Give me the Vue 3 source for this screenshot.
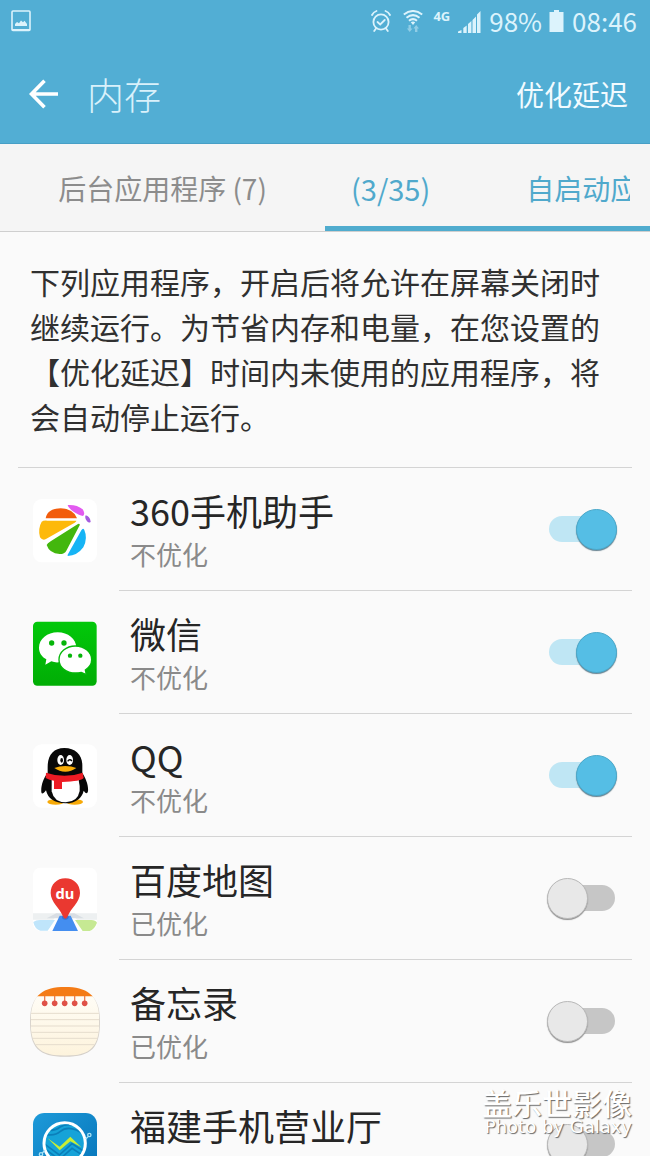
<script setup>
import { reactive } from 'vue'

const apps = reactive([
  { id: 'assistant', name: '360手机助手', running: true },
  { id: 'wechat', name: '微信', running: true },
  { id: 'qq', name: 'QQ', running: true },
  { id: 'map', name: '百度地图', running: false },
  { id: 'memo', name: '备忘录', running: false },
  { id: 'mobile', name: '福建手机营业厅', running: false }
])
</script>

<template>
  <div class="screen">
    <header class="top">
      <div class="status">
        <svg class="shot" width="20" height="22" viewBox="0 0 20 22" aria-hidden="true">
          <rect x="1" y="1" width="18" height="19.5" rx="1" fill="none" stroke="currentColor" stroke-width="1.6" />
          <path d="M1 19h18v2H1z" fill="currentColor" />
          <path d="M4 16v-2l2-2 2 1.200 2-2.700 2 1.700 1.500-1.500 2.500 3.300v2z" fill="currentColor" />
        </svg>
        <svg class="alarm" width="20" height="22" viewBox="0 0 20 22" fill="none" stroke="currentColor" stroke-width="1.8" stroke-linecap="round" aria-hidden="true">
          <circle cx="10" cy="12" r="7.600" />
          <path d="M1 5Q2.500 2 5.500 1M14.500 1Q17.500 2 19 5M5 18.500l-1.800 2.500M15 18.500l1.800 2.500M6.500 12l2.700 2.500 4.500-4.500" />
        </svg>
        <svg class="wifi" width="20" height="22" viewBox="0 0 20 22" aria-hidden="true">
          <g fill="none" stroke="currentColor" stroke-width="2">
            <path d="M0.800 4.500Q10-2.500 19.200 4.500" />
            <path d="M3.500 7.800Q10 2.500 16.500 7.800" />
            <path d="M6 10.800Q10 7.400 14 10.800" />
          </g>
          <path d="M7.800 12.300Q10 10.800 12.200 12.300L10 15z" fill="currentColor" />
          <path d="M5.500 15h2.400v3.500h1.600L6.700 22l-2.800-3.500h1.600zM12 22h2.400v-3.500H16L13.200 15l-2.800 3.500H12z" fill="currentColor" opacity=".45" />
        </svg>
        <span class="network">4G</span>
        <svg class="signal" width="23" height="23" viewBox="0 0 23 23" fill="currentColor" aria-hidden="true">
          <path d="M0 23v-1.500L3.500 20v3zM5.300 23v-5l3.400-2.400V23zM10 23v-9l3.400-3V23zM14.500 23V10L18 6.500V23zM19 23V4.500L22.500 1v22z" />
        </svg>
        <span class="level">98%</span>
        <svg class="battery" width="15" height="22" viewBox="0 0 15 22" fill="currentColor" aria-hidden="true">
          <path d="M5 0h5v2h4.500v20H.5V2H5z" />
        </svg>
        <time class="clock">08:46</time>
      </div>
      <div class="bar">
        <button class="back" type="button" aria-label="返回">
          <svg width="30" height="30" viewBox="0 0 30 30" fill="none" stroke="currentColor" stroke-width="3.600" aria-hidden="true">
            <path d="M29 15H3M15.500 1.800L2.500 15l13 13.200" />
          </svg>
        </button>
        <h1>内存</h1>
        <button class="delay" type="button">优化延迟</button>
      </div>
    </header>

    <nav class="tabs">
      <button class="tab" type="button">后台应用程序 (7)</button>
      <button class="tab active" type="button">
        <span class="ticker"><span class="count">(3/35)</span><span>自启动应用程序</span></span>
      </button>
    </nav>

    <main class="content">
      <p class="intro">下列应用程序，开启后将允许在屏幕关闭时继续运行。为节省内存和电量，在您设置的【优化延迟】时间内未使用的应用程序，将会自动停止运行。</p>

      <ul class="apps">
        <li v-for="app in apps" :key="app.id" class="app">
          <svg v-if="app.id === 'assistant'" class="icon" viewBox="30 27 210 210" aria-hidden="true">
            <rect x="39" y="39" width="192" height="190" rx="26" fill="#fff" />
            <path d="M77 97Q82 68 122 67Q160 68 171 97Z" fill="#f25c0c" />
            <path d="M65 107Q70 103 82 104L169 104Q170 106 164 110L78 159Q68 165 60 154Q53 128 65 107Z" fill="#fdb90b" />
            <path d="M80 177Q82 172 92 166L174 114Q181 112 179 118L139 194Q134 204 119 204Q88 202 80 177Z" fill="#43b70d" />
            <path d="M143 206L184 133Q189 124 193 132Q204 157 190 184Q172 209 143 210Z" fill="#16b4f5" />
            <path d="M143 57Q170 55 188 70Q197 83 189 90Q178 89 162 78Q144 65 143 57Z" fill="#e25af0" />
            <path d="M197 88Q209 90 212 107Q208 113 201 106Q193 95 197 88Z" fill="#a45bdf" />
          </svg>

          <svg v-else-if="app.id === 'wechat'" class="icon" viewBox="30 27 210 210" aria-hidden="true">
            <defs>
              <linearGradient id="wechat-bg" x1="0" y1="0" x2="0" y2="1">
                <stop offset="0" stop-color="#02c80a" /><stop offset="1" stop-color="#01ad05" />
              </linearGradient>
            </defs>
            <rect x="39" y="38" width="191" height="192" rx="13" fill="url(#wechat-bg)" />
            <path d="M113 70C82 70 57 90 57 116C57 131 65 143 79 151L76 167L94 157Q104 161 116 160C146 158 169 141 169 116C169 90 144 70 113 70Z" fill="#fff" />
            <path d="M166 111C138 111 117 130 117 152C117 175 139 192 166 192Q176 192 184 190L199 197L196 183C208 175 215 165 215 152C215 130 194 111 166 111Z" fill="#fff" stroke="#05b70a" stroke-width="4" />
            <g fill="#05b509">
              <circle cx="95" cy="102" r="8" /><circle cx="132" cy="102" r="8" />
              <circle cx="150" cy="140" r="6.500" /><circle cx="181" cy="140" r="6.500" />
            </g>
          </svg>

          <svg v-else-if="app.id === 'qq'" class="icon" viewBox="30 30 210 210" aria-hidden="true">
            <rect x="39" y="40" width="192" height="190" rx="26" fill="#fff" />
            <ellipse cx="107" cy="213" rx="25" ry="8" fill="#f7aa08" />
            <ellipse cx="164" cy="213" rx="25" ry="8" fill="#f7aa08" />
            <path d="M133 51C99 51 83 75 83 107V125C70 142 62 165 64 184Q66 194 78 178C83 202 104 217 136 217C168 217 186 201 191 179Q201 193 204 181C206 163 197 141 187 126V103C187 72 167 51 133 51Z" fill="#080808" />
            <path d="M95 147H176Q180 164 179 180Q173 213 137 214Q102 214 95 181Z" fill="#fff" />
            <path d="M78 125Q134 144 188 125L191 141Q184 151 126 153V174H102V149Q88 148 77 141Z" fill="#ed1b24" />
            <ellipse cx="122" cy="87" rx="10" ry="15" fill="#fff" /><ellipse cx="149" cy="87" rx="10" ry="15" fill="#fff" />
            <ellipse cx="125" cy="88" rx="4" ry="7" fill="#080808" />
            <path d="M143 91Q149 82 156 90" fill="none" stroke="#080808" stroke-width="4" />
            <path d="M103 111Q118 105 136 105Q155 105 169 111Q154 122 136 122Q118 122 103 111Z" fill="#f8ad09" />
          </svg>

          <svg v-else-if="app.id === 'map'" class="icon" viewBox="30 27 210 210" aria-hidden="true">
            <rect x="39" y="38" width="192" height="190" rx="22" fill="#fff" />
            <path d="M39 175H115L100 194H39ZM156 175H231V194H171Z" fill="#edf0f1" />
            <path d="M80 190L109 175H163L192 190Z" fill="#d9dee4" />
            <path d="M40 201Q49 194 63 195H105L83 227H61Q44 222 40 201Z" fill="#bfe5fb" />
            <path d="M165 195H211Q226 194 231 203Q223 224 209 228H188Z" fill="#c6e993" />
            <path d="M119 182H152L174 228H97Z" fill="#448ef0" />
            <ellipse cx="136" cy="187" rx="10" ry="7" fill="#315fc0" opacity=".6" />
            <path d="M136 70C110 70 92 89 92 114C92 142 119 158 130 186Q136 196 142 186C153 158 180 142 180 114C180 89 162 70 136 70Z" fill="#ea3830" />
            <text class="du" x="135" y="132" text-anchor="middle" fill="#fff">du</text>
          </svg>

          <svg v-else-if="app.id === 'memo'" class="icon" viewBox="30 33 210 210" aria-hidden="true">
            <defs>
              <clipPath id="memo-shape">
                <path d="M135 33C202 33 238 57 238 135C238 211 214 239 135 239C56 239 32 211 32 135C32 57 68 33 135 33Z" />
              </clipPath>
              <linearGradient id="memo-paper" x1="0" y1="0" x2="0" y2="1">
                <stop offset="0" stop-color="#fffefa" /><stop offset="1" stop-color="#fdf3dc" />
              </linearGradient>
            </defs>
            <path d="M135 35C203 35 240 58 240 137C240 214 215 242 135 242C55 242 30 214 30 137C30 58 67 35 135 35Z" fill="#d5d0c9" />
            <g clip-path="url(#memo-shape)">
              <path d="M30 30h210v212H30z" fill="url(#memo-paper)" />
              <path d="M30 30h210v31H30z" fill="#f47b16" />
              <path d="M30 112h210M30 131h210M30 150h210M30 169h210M30 187h210M30 206h210" stroke="#e5dccd" stroke-width="3" />
              <path d="M74 60v20M104 60v20M134 60v20M164 60v20M194 60v20" stroke="#ee8050" stroke-width="4" />
              <g fill="#df5147">
                <circle cx="74" cy="82" r="8.500" /><circle cx="104" cy="82" r="8.500" /><circle cx="134" cy="82" r="8.500" />
                <circle cx="164" cy="82" r="8.500" /><circle cx="194" cy="82" r="8.500" />
              </g>
            </g>
          </svg>

          <svg v-else class="icon" viewBox="30 39 210 210" aria-hidden="true">
            <defs>
              <linearGradient id="mobile-bg" x1="0" y1="0" x2="1" y2="1">
                <stop offset="0" stop-color="#1d9ad9" /><stop offset="1" stop-color="#0573b8" />
              </linearGradient>
              <clipPath id="mobile-disc"><circle cx="134" cy="139" r="57" /></clipPath>
            </defs>
            <rect x="39" y="48" width="192" height="192" rx="34" fill="url(#mobile-bg)" />
            <circle cx="134" cy="139" r="62" fill="#16a3d8" stroke="#fff" stroke-width="9" />
            <g clip-path="url(#mobile-disc)" fill="none" stroke="#0b7fba" stroke-width="5">
              <path d="M75 112Q105 118 120 104Q150 80 196 116M75 100Q105 103 120 90Q150 72 196 100M75 142L118 174L156 140L196 166M75 156L118 188L156 154L196 180" />
            </g>
            <path d="M83 124L119 149L151 119L184 151L151 133L119 160Z" fill="#c9ee35" />
            <g fill="none" stroke="#a9e3f5" stroke-width="4">
              <circle cx="208" cy="114" r="5" /><path d="M197 126l7-7" />
              <circle cx="63" cy="172" r="5" /><path d="M67 168l8-8" />
            </g>
          </svg>

          <div class="body">
            <label class="label" :for="'switch-' + app.id">
              <span class="name">{{ app.name }}</span>
              <span class="state">{{ app.running ? '不优化' : '已优化' }}</span>
            </label>
            <input :id="'switch-' + app.id" v-model="app.running" class="switch" type="checkbox" role="switch" />
          </div>
        </li>
      </ul>
    </main>

    <div class="watermark">
      <span class="mark-cn">盖乐世影像</span>
      <span class="mark-en">Photo by Galaxy</span>
    </div>
  </div>
</template>

<style>
body {
  margin: 0;
}
</style>

<style scoped>
.screen {
  position: relative;
  display: flex;
  flex-direction: column;
  height: 100vh;
  overflow: hidden;
  background: #fafafa;
  color: #262626;
  font-family: "Noto Sans CJK SC", "Noto Sans", sans-serif;
}

button {
  margin: 0;
  padding: 0;
  border: 0;
  background: none;
  color: inherit;
  font: inherit;
  cursor: pointer;
}

svg {
  display: block;
  flex: none;
}

.top {
  flex: none;
  background: #52aed4;
  border-bottom: 1px solid #479fc6;
}

.status {
  display: flex;
  align-items: center;
  padding: 0 13px 2px 11px;
  color: #dcf3fc;
  font-size: 26px;
  line-height: 42px;
}

.shot {
  margin-right: auto;
}

.wifi {
  margin-left: 12px;
}

.network {
  margin: 0 8px 0 10px;
  font: bold 13px/16px "Noto Sans", sans-serif;
  align-self: flex-start;
  padding-top: 8px;
}

.level {
  margin: 0 7px 0 8px;
}

.clock {
  margin-left: 8px;
}

.bar {
  display: flex;
  align-items: center;
  height: 99px;
  padding: 0 22px 0 29px;
  color: #fff;
}

h1 {
  flex: 1;
  margin: 0 0 0 28px;
  color: #d9f1fb;
  font-size: 37px;
  font-weight: 300;
  line-height: 54px;
}

.delay {
  color: #f2fbff;
  font-size: 28px;
  line-height: 40px;
}

.tabs {
  display: grid;
  flex: none;
  grid-template-columns: 1fr 1fr;
  height: 87px;
  background: #f5f5f5;
  border-bottom: 1px solid #cfcfcf;
}

.tab {
  min-width: 0;
  box-sizing: border-box;
  padding-top: 6px;
  border-bottom: 5px solid transparent;
  color: #8c8c8c;
  font-size: 28px;
  line-height: 40px;
}

.active {
  padding: 6px 20px 0 26px;
  border-bottom-color: #50acce;
  color: #50a9cc;
}

.ticker {
  display: flex;
  gap: 96px;
  overflow: hidden;
  white-space: nowrap;
}

.count {
  font-size: 29px;
}

.content {
  flex: 1;
  min-height: 0;
  overflow-y: auto;
  scrollbar-width: none;
}

.intro {
  margin: 0 18px;
  padding: 27px 12px 28px;
  border-bottom: 1px solid #d4d4d4;
  color: #303030;
  font-size: 30px;
  line-height: 45px;
}

.apps {
  margin: 0;
  padding: 0 18px 0 30px;
  list-style: none;
}

.app {
  display: flex;
  align-items: center;
  gap: 19px;
}

.icon {
  width: 70px;
  height: 70px;
}

.du {
  font: bold 44px "Noto Sans", sans-serif;
}

.body {
  display: flex;
  flex: 1;
  align-items: center;
  padding: 17px 15px 17px 11px;
  border-bottom: 1px solid #d4d4d4;
}

.label {
  display: flex;
  flex: 1;
  flex-direction: column;
}

.name {
  font-size: 36px;
  line-height: 50px;
}

.state {
  color: #8a8a8a;
  font-size: 26px;
  line-height: 38px;
}

.switch {
  position: relative;
  display: flex;
  flex: none;
  align-items: center;
  width: 70px;
  height: 42px;
  margin: 0;
  appearance: none;
  cursor: pointer;
}

.switch::before {
  content: "";
  position: absolute;
  inset: 8px 2px;
  border-radius: 13px;
  background: #c6c6c6;
}

.switch::after {
  content: "";
  position: relative;
  box-sizing: border-box;
  width: 41px;
  height: 41px;
  border: 1px solid #b9b9b9;
  border-radius: 50%;
  background: #e8e8e8;
  box-shadow: 0 1px 1px #8f8f8f;
}

.switch:checked {
  justify-content: flex-end;
}

.switch:checked::before {
  background: #bfe6f4;
}

.switch:checked::after {
  border-color: #4ba9cb;
  background: #55bee5;
  box-shadow: 0 1px 1px #64808f;
}

.watermark {
  position: absolute;
  right: 18px;
  bottom: 19px;
  display: flex;
  flex-direction: column;
  align-items: flex-end;
  color: #fff;
  text-shadow: 1px 1px 1px #666;
  white-space: nowrap;
  pointer-events: none;
}

.mark-cn {
  font-size: 30px;
  font-weight: 500;
  line-height: 30px;
}

.mark-en {
  font: 18px/20px "DejaVu Sans", sans-serif;
}
</style>
